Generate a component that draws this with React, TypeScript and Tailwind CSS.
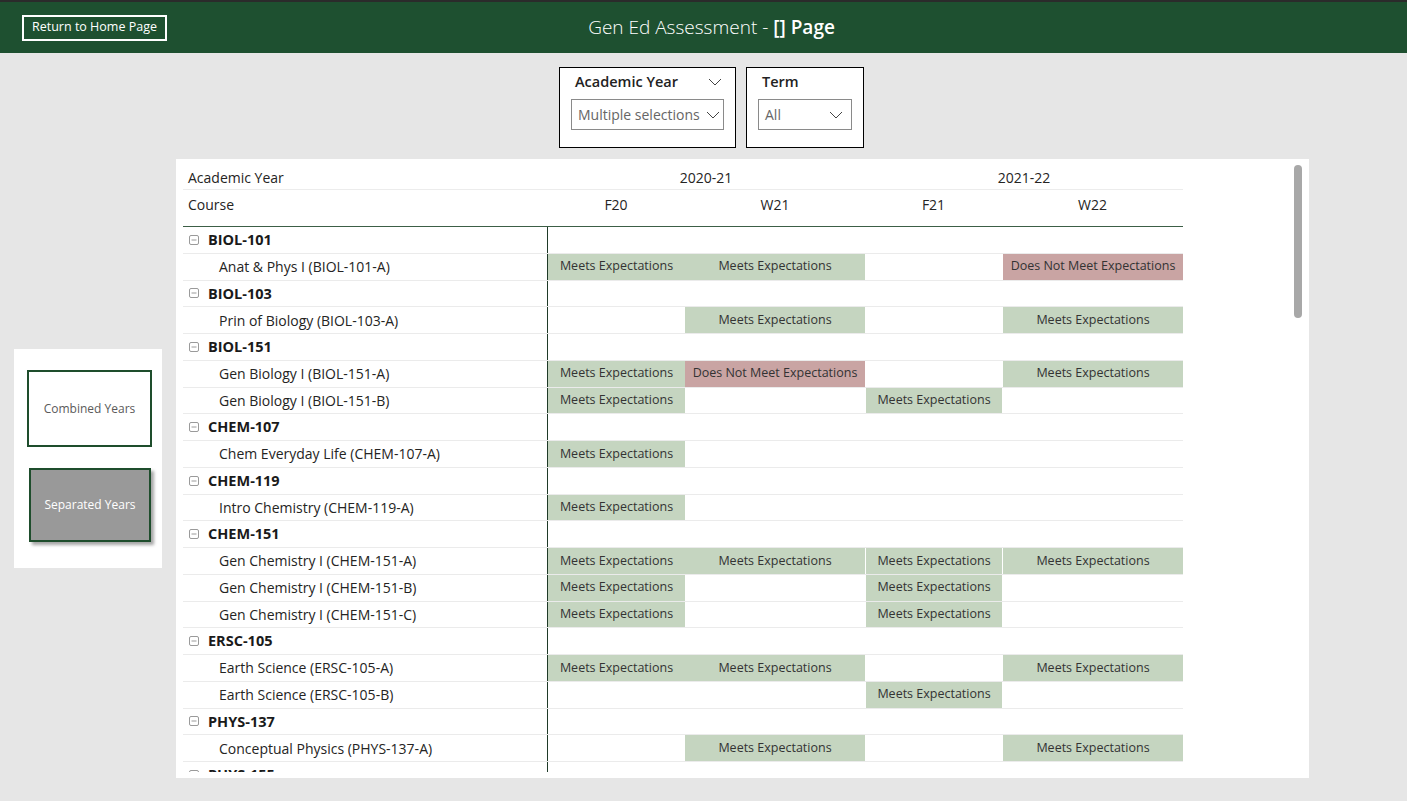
type Mark = 'M' | 'D' | ''

interface Row { label: string; group?: boolean; cells?: Mark[] }

const rows: Row[] = [
  { label: 'BIOL-101', group: true },
  { label: 'Anat & Phys I (BIOL-101-A)', cells: ['M', 'M', '', 'D'] },
  { label: 'BIOL-103', group: true },
  { label: 'Prin of Biology (BIOL-103-A)', cells: ['', 'M', '', 'M'] },
  { label: 'BIOL-151', group: true },
  { label: 'Gen Biology I (BIOL-151-A)', cells: ['M', 'D', '', 'M'] },
  { label: 'Gen Biology I (BIOL-151-B)', cells: ['M', '', 'M', ''] },
  { label: 'CHEM-107', group: true },
  { label: 'Chem Everyday Life (CHEM-107-A)', cells: ['M', '', '', ''] },
  { label: 'CHEM-119', group: true },
  { label: 'Intro Chemistry (CHEM-119-A)', cells: ['M', '', '', ''] },
  { label: 'CHEM-151', group: true },
  { label: 'Gen Chemistry I (CHEM-151-A)', cells: ['M', 'M', 'M', 'M'] },
  { label: 'Gen Chemistry I (CHEM-151-B)', cells: ['M', '', 'M', ''] },
  { label: 'Gen Chemistry I (CHEM-151-C)', cells: ['M', '', 'M', ''] },
  { label: 'ERSC-105', group: true },
  { label: 'Earth Science (ERSC-105-A)', cells: ['M', 'M', '', 'M'] },
  { label: 'Earth Science (ERSC-105-B)', cells: ['', '', 'M', ''] },
  { label: 'PHYS-137', group: true },
  { label: 'Conceptual Physics (PHYS-137-A)', cells: ['', 'M', '', 'M'] },
  { label: 'PHYS-155', group: true },
]

const colW = ['w-[138px]', 'w-[180px]', 'w-[137px]', 'w-[181px]']

const Chevron = () => (
  <svg width="14" height="8" viewBox="0 0 14 8" fill="none" className="shrink-0">
    <path d="M1 1l6 6 6-6" stroke="#444" strokeWidth="1" />
  </svg>
)

const Collapse = () => (
  <svg width="10" height="10" viewBox="0 0 10 10" fill="none" className="shrink-0">
    <rect x="0.5" y="0.5" width="9" height="9" rx="1.5" stroke="#9a9a9a" />
    <path d="M2.5 5h5" stroke="#9a9a9a" />
  </svg>
)

const Cell = ({ m, i }: { m: Mark; i: number }) => {
  const bg = m === 'M' ? 'bg-[#c5d5c0]' : m === 'D' ? 'bg-[#c9a4a3]' : ''
  return (
    <div className={`${colW[i]} h-full flex items-center justify-center text-[12.5px] text-[#333] whitespace-nowrap ${bg} ${i === 0 ? 'border-l border-[#1f3a28]' : ''} ${i > 1 && m ? 'border-l border-white' : ''}`}>
      {m === 'M' ? 'Meets Expectations' : m === 'D' ? 'Does Not Meet Expectations' : ''}
    </div>
  )
}

export default function App() {
  return (
    <div className="w-[1407px] h-[801px] bg-[#e6e6e6] overflow-hidden" style={{ fontFamily: '"Open Sans", "Noto Sans", sans-serif' }}>
      {/* top bar */}
      <div className="h-[53px] bg-[#1e5030] border-t-2 border-[#2b2b2b] flex items-center relative">
        <button className="ml-[22px] h-[26px] px-[8px] border-2 border-white text-white text-[12.5px] leading-none">
          Return to Home Page
        </button>
        <div className="absolute left-[16px] right-0 top-[11px] text-center text-white text-[19px] pointer-events-none">
          <span className="font-light">Gen Ed Assessment - </span>
          <span className="font-semibold">[] Page</span>
        </div>
      </div>

      {/* slicers */}
      <div className="flex gap-[10px] pl-[559px] pt-[14px]">
        <div className="w-[177px] h-[81px] bg-white border border-black px-[11px] pt-[4px]">
          <div className="h-[20px] flex items-center justify-between pl-[4px] pr-[2px]">
            <span className="text-[14.5px] font-semibold text-[#222] leading-none">Academic Year</span>
            <Chevron />
          </div>
          <div className="mt-[7px] h-[31px] border border-[#8a8a8a] flex items-center justify-between pl-[6px] pr-[3px]">
            <span className="text-[14px] text-[#666] whitespace-nowrap">Multiple selections</span>
            <Chevron />
          </div>
        </div>
        <div className="w-[118px] h-[81px] bg-white border border-black px-[11px] pt-[4px]">
          <div className="h-[20px] flex items-center pl-[4px]">
            <span className="text-[14.5px] font-semibold text-[#222] leading-none">Term</span>
          </div>
          <div className="mt-[7px] h-[31px] border border-[#8a8a8a] flex items-center justify-between pl-[6px] pr-[8px]">
            <span className="text-[14px] text-[#666]">All</span>
            <Chevron />
          </div>
        </div>
      </div>

      <div className="flex mt-[11px]">
        {/* view toggles */}
        <div className="ml-[14px] mt-[190px] w-[148px] h-[219px] bg-white pl-[13px] pt-[21px] flex flex-col">
          <div className="w-[125px] h-[77px] border-2 border-[#1e4d2c] bg-white flex items-center justify-center text-[12px] text-[#5a5a5a]">
            Combined Years
          </div>
          <div className="ml-[2px] mt-[21px] w-[122px] h-[74px] border-2 border-[#1e4d2c] bg-[#999999] flex items-center justify-center text-[12px] text-white shadow-[3px_3px_3px_rgba(0,0,0,0.35)]">
            Separated Years
          </div>
        </div>

        {/* matrix */}
        <div className="ml-[14px] w-[1133px] h-[619px] bg-white relative pl-[7px] pt-[7px]">
          <div className="absolute left-[1118px] top-[6px] w-[8px] h-[153px] rounded-full bg-[#a8a8a8]" />
          <div className="w-[1000px] text-[14px] text-[#252423]">
            <div className="h-[24px] flex items-center border-b border-[#ececec]">
              <div className="w-[364px] pl-[5px]">Academic Year</div>
              <div className="w-[318px] text-center">2020-21</div>
              <div className="w-[318px] text-center">2021-22</div>
            </div>
            <div className="h-[37px] flex items-center border-b border-[#3c5e46]">
              <div className="w-[364px] pl-[5px] -mt-[7px]">Course</div>
              {['F20', 'W21', 'F21', 'W22'].map((t, i) => (
                <div key={t} className={`${colW[i]} text-center -mt-[7px]`}>{t}</div>
              ))}
            </div>
            <div className="h-[545px] overflow-hidden">
              {rows.map((r, idx) => (
                <div key={idx} className="h-[26.75px] flex items-stretch border-b border-[#ebebeb]">
                  {r.group ? (
                    <div className="w-[364px] flex items-center gap-[9px] pl-[6px] font-bold text-[14.5px] text-[#1a1a1a]">
                      <Collapse />
                      <span>{r.label}</span>
                    </div>
                  ) : (
                    <div className="w-[364px] flex items-center pl-[36px] text-[14px] text-[#252423] whitespace-nowrap">{r.label}</div>
                  )}
                  {(r.cells ?? ['', '', '', '']).map((m, i) => (
                    <Cell key={i} m={m} i={i} />
                  ))}
                </div>
              ))}
            </div>
          </div>
        </div>
      </div>
    </div>
  )
}
